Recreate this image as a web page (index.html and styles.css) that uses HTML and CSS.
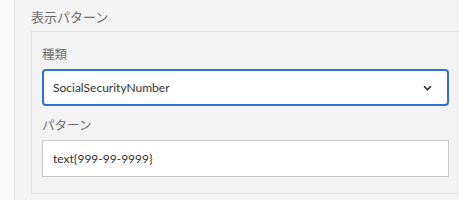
FILE: index.html
```
<!DOCTYPE html>
<html lang="ja">
<head>
    <meta charset="UTF-8">
    <title>表示パターン</title>
    <link rel="stylesheet" href="styles.css">
</head>
<body>
    <div class="rail"></div>
    <div class="main">
        <div class="section-title">表示パターン</div>
        <div class="panel">
            <div class="field-label">種類</div>
            <div class="select-box">
                <span class="select-value">SocialSecurityNumber</span>
                <svg class="chevron" width="9" height="6" viewBox="0 0 9 6">
                    <path d="M1 1.2 L4.5 4.6 L8 1.2" fill="none" stroke="#2c2c2c" stroke-width="1.6"/>
                </svg>
            </div>
            <div class="field-label second">パターン</div>
            <div class="text-box">text{999-99-9999}</div>
        </div>
    </div>
</body>
</html>
```
FILE: styles.css
```
body {
    margin: 0;
    padding: 0;
    display: flex;
    height: 200px;
    overflow: hidden;
    background-color: #f4f4f4;
    font-family: Lato, "Noto Sans CJK JP", sans-serif;
}

.rail {
    width: 14px;
    flex-shrink: 0;
    background-color: #fafafa;
    border-right: 1px solid #e4e4e4;
}

.main {
    flex: 1;
    padding-left: 16px;
}

.section-title {
    height: 31px;
    box-sizing: border-box;
    padding-top: 8px;
    font-size: 13px;
    line-height: 18px;
    color: #6e6e6e;
}

.panel {
    background-color: #f3f3f3;
    border: 1px solid #e3e3e3;
    border-right: none;
    padding: 14px 0 16px 10px;
    margin-right: -10px;
}

.field-label {
    font-size: 12.5px;
    line-height: 18px;
    color: #6e6e6e;
    margin-bottom: 5px;
}

.field-label.second {
    margin-top: 11px;
}

.select-box {
    width: 407px;
    height: 37px;
    box-sizing: border-box;
    display: flex;
    align-items: center;
    justify-content: space-between;
    padding: 0 15px 0 9px;
    background-color: white;
    border: 2px solid #2f6fd8;
    border-radius: 4px;
    font-size: 12px;
    color: #323232;
}

.text-box {
    width: 407px;
    height: 37px;
    box-sizing: border-box;
    display: flex;
    align-items: center;
    padding-left: 10px;
    background-color: white;
    border: 1px solid #cacaca;
    font-size: 12px;
    color: #323232;
}
```
